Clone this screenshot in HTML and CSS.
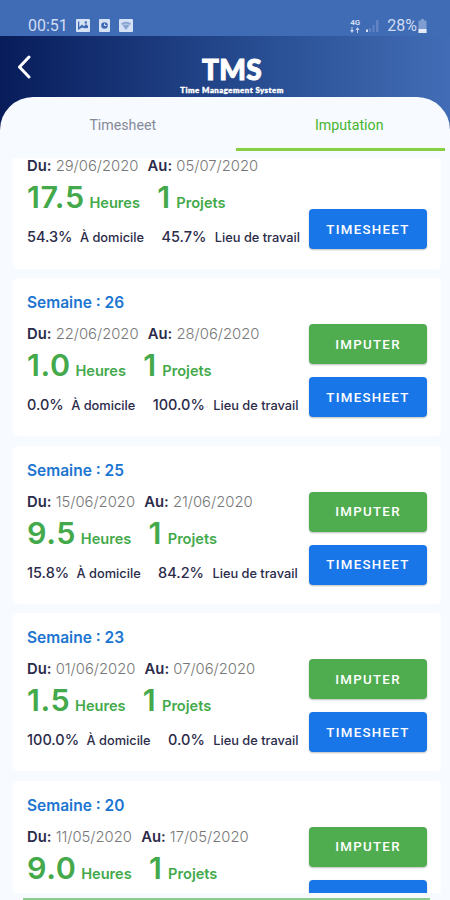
FILE: index.html
```html
<!DOCTYPE html>
<html lang="fr">

<head>
    <meta charset="UTF-8">
    <meta name="viewport" content="width=device-width,initial-scale=1.0">
    <title>TMS - Imputation</title>
    <link rel="stylesheet" href="styles.css">
</head>

<body>
    <div class="app">
        <div class="status">
            <span class="clock">00:51</span>
            <svg class="note" width="14" height="13" viewBox="0 0 14 13">
                <rect width="14" height="13" rx="1" fill="#d5e1f5" />
                <path d="M2 11V2.5h1.3V8l2.7-2.5 2 1.7L10 5l2 2v2l-3.5.3L6 8.5z" fill="#406bb3" />
                <circle cx="9.8" cy="3.5" r="1.2" fill="#406bb3" />
            </svg>
            <svg class="note" width="11" height="13" viewBox="0 0 11 13">
                <rect width="11" height="13" rx="1" fill="#d5e1f5" />
                <circle cx="5.5" cy="6.5" r="3.3" fill="#406bb3" />
                <path d="M5.5 4.5v2h2" fill="none" stroke="#d5e1f5" stroke-width="1" />
            </svg>
            <svg class="note" width="14" height="13" viewBox="0 0 14 13">
                <rect width="14" height="13" rx="1" fill="#d5e1f5" />
                <path d="M2 4.5c3-2.3 7-2.3 10 0L7 11z" fill="#8ba5d3" />
                <path d="M3.5 6.3c2-1.5 5-1.5 7 0" fill="none" stroke="#d5e1f5" stroke-width=".7" />
            </svg>
            <div class="network">
                <span>4G</span>
                <svg width="10" height="6" viewBox="0 0 10 6">
                    <path d="M0 3l2 3 2-3zM5.500 3L7.500 0l2 3z" fill="#c3d3ee" />
                    <path d="M1.500 0h1v3h-1zM7 3h1v3H7z" fill="#c3d3ee" />
                </svg>
            </div>
            <svg class="signal" width="13" height="13" viewBox="0 0 13 13">
                <path d="M3 9h2v4H3zM6.500 6h2v7h-2zM10 1h2.500v12H10z" fill="#6083c2" />
                <path d="M0 10.500h2V13H0z" fill="#d5e1f5" />
            </svg>
            <span class="percent">28%</span>
            <svg width="9" height="14" viewBox="0 0 9 14">
                <path d="M3 0h3v1.500h2.500V14h-8V1.500H3z" fill="#7f9dd0" />
                <path d="M.5 10h8v4h-8z" fill="#e4ecf9" />
            </svg>
        </div>

        <div class="header">
            <svg class="back" width="16" height="24" viewBox="0 0 16 24">
                <path d="M12 2L2.500 12L12 22" fill="none" stroke="#fff" stroke-width="3" stroke-linecap="round" stroke-linejoin="round" />
            </svg>
            <div class="logo">
                <span class="name">TMS</span>
                <span class="tagline">Time Management System</span>
            </div>
        </div>

        <div class="sheet">
            <div class="tabs">
                <div class="tab">Timesheet</div>
                <div class="tab active">Imputation</div>
            </div>

            <div class="weeks">
                <!-- Current week, cut by the tabs -->
                <div class="card current">
                    <div class="info">
                        <p class="dates"><b>Du:</b> <span>29/06/2020</span> <b>Au:</b> <span>05/07/2020</span></p>
                        <p class="totals"><b>17.5</b> <span>Heures</span> <b>1</b> <span>Projets</span></p>
                        <p class="places"><b>54.3%</b> <span>À domicile</span> <b>45.7%</b> <span>Lieu de travail</span></p>
                    </div>
                    <div class="actions">
                        <button class="btn blue">TIMESHEET</button>
                    </div>
                </div>
                <div class="card">
                    <div class="info">
                        <h2 class="week">Semaine : 26</h2>
                        <p class="dates"><b>Du:</b> <span>22/06/2020</span> <b>Au:</b> <span>28/06/2020</span></p>
                        <p class="totals"><b>1.0</b> <span>Heures</span> <b>1</b> <span>Projets</span></p>
                        <p class="places"><b>0.0%</b> <span>À domicile</span> <b>100.0%</b> <span>Lieu de travail</span></p>
                    </div>
                    <div class="actions">
                        <button class="btn green">IMPUTER</button>
                        <button class="btn blue">TIMESHEET</button>
                    </div>
                </div>
                <div class="card">
                    <div class="info">
                        <h2 class="week">Semaine : 25</h2>
                        <p class="dates"><b>Du:</b> <span>15/06/2020</span> <b>Au:</b> <span>21/06/2020</span></p>
                        <p class="totals"><b>9.5</b> <span>Heures</span> <b>1</b> <span>Projets</span></p>
                        <p class="places"><b>15.8%</b> <span>À domicile</span> <b>84.2%</b> <span>Lieu de travail</span></p>
                    </div>
                    <div class="actions">
                        <button class="btn green">IMPUTER</button>
                        <button class="btn blue">TIMESHEET</button>
                    </div>
                </div>
                <div class="card">
                    <div class="info">
                        <h2 class="week">Semaine : 23</h2>
                        <p class="dates"><b>Du:</b> <span>01/06/2020</span> <b>Au:</b> <span>07/06/2020</span></p>
                        <p class="totals"><b>1.5</b> <span>Heures</span> <b>1</b> <span>Projets</span></p>
                        <p class="places"><b>100.0%</b> <span>À domicile</span> <b>0.0%</b> <span>Lieu de travail</span></p>
                    </div>
                    <div class="actions">
                        <button class="btn green">IMPUTER</button>
                        <button class="btn blue">TIMESHEET</button>
                    </div>
                </div>
                <div class="card">
                    <div class="info">
                        <h2 class="week">Semaine : 20</h2>
                        <p class="dates"><b>Du:</b> <span>11/05/2020</span> <b>Au:</b> <span>17/05/2020</span></p>
                        <p class="totals"><b>9.0</b> <span>Heures</span> <b>1</b> <span>Projets</span></p>
                    </div>
                    <div class="actions">
                        <button class="btn green">IMPUTER</button>
                        <div class="btn blue"></div>
                    </div>
                </div>
            </div>
            <div class="bottom"></div>
        </div>
    </div>
</body>

</html>
```
FILE: styles.css
```css
* {
    padding: 0;
    margin: 0;
    box-sizing: border-box;
}

body {
    font-family: Inter, "Liberation Sans", sans-serif;
}

.app {
    display: flex;
    flex-direction: column;
    width: 450px;
    height: 900px;
    overflow: hidden;
    background: linear-gradient(to right, #081c5a, #1b3a7d 35%, #2c5398 65%, #426db6);
}

/* Status bar */
.status {
    display: flex;
    height: 36px;
    padding: 15px 23px 0 28px;
    align-items: center;
    background: #406bb5;
    color: #d0ddf3;
    font-family: Roboto, sans-serif;
    font-size: 16px;
}

.clock {
    width: 40px;
    margin-right: 8px;
}

.note {
    margin-right: 9px;
}

.network {
    display: flex;
    flex-direction: column;
    align-items: center;
    margin-left: auto;
    font-size: 8px;
    line-height: 8px;
    font-weight: bold;
}

.signal {
    margin: 0 8px 0 6px;
}

.percent {
    margin-right: 1px;
}

/* Header */
.header {
    display: grid;
    grid-template-columns: 50px 1fr 36px;
    height: 61px;
    flex-shrink: 0;
}

.back {
    margin: 19px 0 0 17px;
}

.logo {
    display: flex;
    flex-direction: column;
    align-items: center;
    padding-top: 17px;
    color: #fff;
    font-family: Lato, sans-serif;
    font-weight: 900;
}

.name {
    font-size: 28px;
    line-height: 33px;
    letter-spacing: 0.4px;
    -webkit-text-stroke: 1px #fff;
}

.tagline {
    font-size: 7.8px;
    line-height: 9px;
    letter-spacing: 0.5px;
    white-space: nowrap;
    -webkit-text-stroke: 0.4px #fff;
}

/* White sheet with the tabs and the list */
.sheet {
    display: flex;
    flex-direction: column;
    flex: 1;
    min-height: 0;
    border-radius: 33px 33px 0 0;
    background: #f7faff;
}

.tabs {
    display: grid;
    grid-template-columns: 1fr 1fr;
    gap: 17px;
    height: 54px;
    padding: 0 5px 0 9px;
    flex-shrink: 0;
}

.tab {
    display: grid;
    place-items: center;
    padding: 5px 0 0 18px;
    border-bottom: 3px solid transparent;
    color: #858a98;
    font-family: Roboto, sans-serif;
    font-size: 14.2px;
}

.tab.active {
    border-color: #86cf43;
    color: #45b52d;
}

.weeks {
    flex: 1;
    min-height: 0;
    margin-top: 7px;
    padding: 0 9px 0 13px;
    overflow: hidden;
}

.card {
    display: flex;
    justify-content: space-between;
    height: 158px;
    margin-bottom: 9.5px;
    padding: 0 14px;
    border-radius: 5px;
    background: #fff;
}

.info {
    width: 282px;
    padding-top: 15px;
    white-space: nowrap;
}

.week {
    font-size: 15.5px;
    line-height: 20px;
    font-weight: 600;
    color: #1b75d0;
}

.dates {
    margin-top: 13px;
    font-size: 14.8px;
    line-height: 16px;
    font-weight: 300;
    color: #777;
}

.dates b {
    font-weight: 600;
    color: #2b2b4a;
}

.dates b + span {
    margin-right: 5px;
}

.totals {
    margin-top: 2px;
    font-size: 14.6px;
    line-height: 42px;
    font-weight: 600;
    color: #43a94a;
}

.totals b {
    margin-right: 1px;
    font-size: 30.5px;
    font-weight: 600;
    letter-spacing: 0.6px;
}

.totals span + b {
    margin-right: 2px;
}

.totals b + span {
    margin-right: 13.5px;
}

.places {
    margin-top: 3px;
    font-size: 12.8px;
    line-height: 20px;
    font-weight: 500;
    color: #2b2b4a;
}

.places b {
    margin-right: 4px;
    font-size: 14.5px;
    font-weight: 500;
}

.places span + b {
    margin-right: 5px;
}

.places b + span {
    margin-right: 14px;
}

/* Buttons stand at the bottom of the card */
.actions {
    display: flex;
    flex-direction: column;
    justify-content: flex-end;
    gap: 13px;
    padding-bottom: 19px;
}

.btn {
    width: 118px;
    height: 40px;
    border: none;
    border-radius: 4px;
    box-shadow: 0 1px 2px rgba(0, 0, 0, 0.25);
    color: #fff;
    font-family: Roboto, sans-serif;
    font-size: 13.3px;
    font-weight: 500;
    letter-spacing: 1.3px;
}

.green {
    background: #4fad50;
}

.blue {
    background: #1976e8;
}

.current {
    height: 110.5px;
    border-radius: 0 0 5px 5px;
}

.current .info {
    padding-top: 0;
}

.current .dates {
    margin-top: 0;
}

.current .actions {
    padding-bottom: 19.5px;
}

.bottom {
    height: 2px;
    margin: 5px 20px 0 23px;
    background: #8bcb8d;
    flex-shrink: 0;
}
```
